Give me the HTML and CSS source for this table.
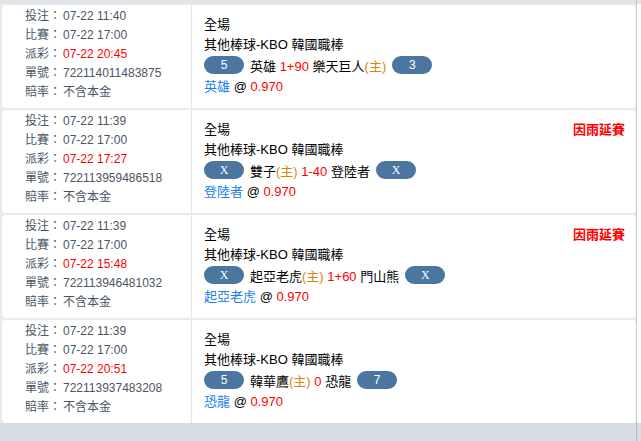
FILE: index.html
```html
<!DOCTYPE html>
<html>
<head>
<meta charset="utf-8">
<link rel="stylesheet" href="styles.css">
</head>
<body>
<div class="page">
  <div class="top"></div>
  <div class="rail"></div>
  <div class="list">
    <div class="row">
      <div class="meta">
        <div class="line"><span class="label">投注：</span>07-22 11:40</div>
        <div class="line"><span class="label">比賽：</span>07-22 17:00</div>
        <div class="line"><span class="label">派彩：</span><span class="red">07-22 20:45</span></div>
        <div class="line"><span class="label">單號：</span>722114011483875</div>
        <div class="line"><span class="label">賠率：</span>不含本金</div>
      </div>
      <div class="detail">
        <div class="head"><span>全場</span></div>
        <div class="txt">其他棒球-KBO 韓國職棒</div>
        <div class="teams"><span class="pill">5</span><span>英雄 <span class="red">1+90</span> 樂天巨人<span class="home">(主)</span></span><span class="pill">3</span></div>
        <div class="pick"><span class="blue">英雄</span> @ <span class="red">0.970</span></div>
      </div>
    </div>
    <div class="row">
      <div class="meta">
        <div class="line"><span class="label">投注：</span>07-22 11:39</div>
        <div class="line"><span class="label">比賽：</span>07-22 17:00</div>
        <div class="line"><span class="label">派彩：</span><span class="red">07-22 17:27</span></div>
        <div class="line"><span class="label">單號：</span>722113959486518</div>
        <div class="line"><span class="label">賠率：</span>不含本金</div>
      </div>
      <div class="detail">
        <div class="head"><span>全場</span><span class="status">因雨延賽</span></div>
        <div class="txt">其他棒球-KBO 韓國職棒</div>
        <div class="teams"><span class="pill x">X</span><span>雙子<span class="home">(主)</span> <span class="red">1-40</span> 登陸者</span><span class="pill x">X</span></div>
        <div class="pick"><span class="blue">登陸者</span> @ <span class="red">0.970</span></div>
      </div>
    </div>
    <div class="row">
      <div class="meta">
        <div class="line"><span class="label">投注：</span>07-22 11:39</div>
        <div class="line"><span class="label">比賽：</span>07-22 17:00</div>
        <div class="line"><span class="label">派彩：</span><span class="red">07-22 15:48</span></div>
        <div class="line"><span class="label">單號：</span>722113946481032</div>
        <div class="line"><span class="label">賠率：</span>不含本金</div>
      </div>
      <div class="detail">
        <div class="head"><span>全場</span><span class="status">因雨延賽</span></div>
        <div class="txt">其他棒球-KBO 韓國職棒</div>
        <div class="teams"><span class="pill x">X</span><span>起亞老虎<span class="home">(主)</span> <span class="red">1+60</span> 門山熊</span><span class="pill x">X</span></div>
        <div class="pick"><span class="blue">起亞老虎</span> @ <span class="red">0.970</span></div>
      </div>
    </div>
    <div class="row">
      <div class="meta">
        <div class="line"><span class="label">投注：</span>07-22 11:39</div>
        <div class="line"><span class="label">比賽：</span>07-22 17:00</div>
        <div class="line"><span class="label">派彩：</span><span class="red">07-22 20:51</span></div>
        <div class="line"><span class="label">單號：</span>722113937483208</div>
        <div class="line"><span class="label">賠率：</span>不含本金</div>
      </div>
      <div class="detail">
        <div class="head"><span>全場</span></div>
        <div class="txt">其他棒球-KBO 韓國職棒</div>
        <div class="teams"><span class="pill">5</span><span>韓華鷹<span class="home">(主)</span> <span class="red">0</span> 恐龍</span><span class="pill">7</span></div>
        <div class="pick"><span class="blue">恐龍</span> @ <span class="red">0.970</span></div>
      </div>
    </div>
  </div>
  <div class="rail rail-mid"></div>
  <div class="bottom"></div>
  <div class="rail rail-bottom"></div>
</div>
</body>
</html>
```
FILE: styles.css
```css
* { box-sizing: border-box; }
html, body { margin: 0; height: 100%; }
body {
  background: #d8dce3;
  font-family: "Liberation Sans", "Noto Sans CJK TC", sans-serif;
}
.page {
  display: grid;
  grid-template-columns: 636px 5px;
  grid-template-rows: 4px auto 1fr;
  height: 441px;
}
.top { background: #e1e4e9; }
.rail { border-left: 1px solid #c3c8cf; background: #e1e4e9; }
.rail-mid { background: #fff; }
.rail-bottom { background: #d8dce3; border-left-color: #b4b9c1; }
.bottom { background: #d8dce3; }
.list {
  background: #e8eaee;
  padding: 1px 0 0 2px;
  display: flex;
  flex-direction: column;
  gap: 2px;
}
.row {
  background: #fff;
  border-radius: 4px;
  display: grid;
  grid-template-columns: 190px 1fr;
  height: 103px;
}
.meta {
  border-right: 1px solid #e3e5e9;
  padding: 2px 0 0 23px;
  font-size: 12px;
  color: #4b5563;
}
.line { height: 19px; line-height: 19px; white-space: nowrap; }
.label { display: inline-block; width: 38px; }
.red { color: #ff0000; }
.blue { color: #1a7ff0; }
.home { color: #d4870c; }
.detail {
  padding: 10px 11px 0 12px;
  font-size: 13px;
  color: #000;
}
.head {
  display: flex;
  justify-content: space-between;
  height: 20px;
  line-height: 20px;
}
.status { color: #ff0000; font-weight: bold; }
.txt { height: 20px; line-height: 20px; }
.teams {
  display: flex;
  align-items: center;
  gap: 6px;
  height: 20px;
  white-space: nowrap;
}
.pill {
  display: inline-flex;
  align-items: center;
  justify-content: center;
  width: 40px;
  height: 18px;
  border-radius: 9px;
  background: #4a76a0;
  color: #fff;
  font-size: 12px;
}
.pill.x { font-family: "Liberation Serif", serif; font-size: 12px; }
.pick { height: 20px; line-height: 20px; margin-top: 2px; }
```
